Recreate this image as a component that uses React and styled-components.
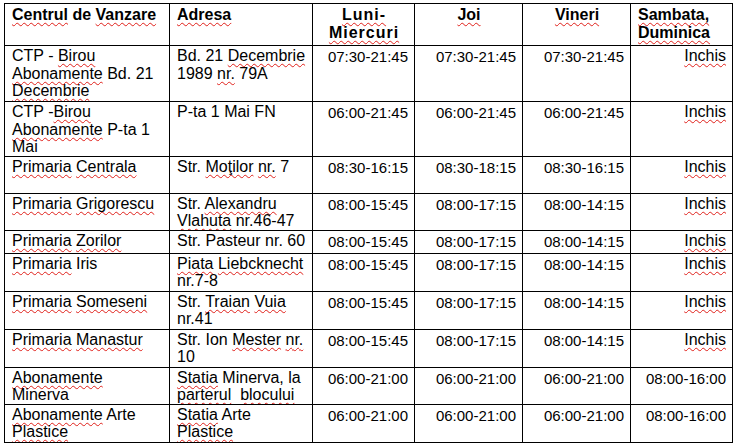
import React from "react";
import styled, { createGlobalStyle } from "styled-components";

const GlobalStyle = createGlobalStyle`
  html, body { margin: 0; padding: 0; background: #ffffff; }
  body { font-family: "Liberation Sans", Arial, sans-serif; color: #000; }
`;

const Page = styled.div`
  padding: 3px 0 0 4px;
`;

const Table = styled.table`
  border-collapse: collapse;
  table-layout: fixed;
  width: 729px;
`;

const Row = styled.tr`
  height: ${(p) => p.$h}px;
`;

const Cell = styled.td`
  border: 1px solid #000;
  padding: ${(p) => (p.$time ? 2 : 1)}px 6px 0 7px;
  vertical-align: top;
  text-align: ${(p) => p.$align || "left"};
  font-size: ${(p) => (p.$time ? 15 : 16)}px;
  line-height: ${(p) => (p.$time ? 17 : 17.5)}px;
  white-space: nowrap;
  overflow: hidden;
`;

const HeadCell = styled(Cell).attrs({ as: "th" })`
  font-weight: bold;
  padding-top: 2px;
  line-height: 18px;
  letter-spacing: ${(p) => (p.$spaced ? "1px" : "normal")};
`;

const Line = styled.span`
  display: block;
`;

const Squiggle = styled.span`
  text-decoration-line: underline;
  text-decoration-style: wavy;
  text-decoration-color: #e0201a;
  text-decoration-thickness: 1px;
  text-underline-offset: 2px;
  text-decoration-skip-ink: none;
`;

function renderText(str) {
  return str.split("|").map((line, li) => {
    const parts = line.split("~");
    return (
      <Line key={li}>
        {parts.map((part, pi) =>
          pi % 2 === 1 ? <Squiggle key={pi}>{part}</Squiggle> : <React.Fragment key={pi}>{part}</React.Fragment>
        )}
      </Line>
    );
  });
}

const header = [
  { t: "~Centrul~ de ~Vanzare~", a: "left" },
  { t: "~Adresa~", a: "left" },
  { t: "~Luni-~|~Miercuri~", a: "center", s: true },
  { t: "~Joi~", a: "center" },
  { t: "~Vineri~", a: "center" },
  { t: "~Sambata,~|~Duminica~", a: "left" },
];

const rows = [
  { h: 56, c: ["CTP - ~Birou~|~Abonamente~ Bd. 21|~Decembrie~", "Bd. 21 ~Decembrie~|1989 ~nr.~ 79A", "07:30-21:45", "07:30-21:45", "07:30-21:45", "~Inchis~"] },
  { h: 54, c: ["CTP -~Birou~|~Abonamente~ P-ta 1|Mai", "P-ta 1 Mai FN", "06:00-21:45", "06:00-21:45", "06:00-21:45", "~Inchis~"] },
  { h: 37, c: ["~Primaria~ ~Centrala~", "Str. ~Moţilor~ ~nr.~ 7", "08:30-16:15", "08:30-18:15", "08:30-16:15", "~Inchis~"] },
  { h: 37, c: ["~Primaria~ ~Grigorescu~", "Str. ~Alexandru~|~Vlahuta~ nr.46-47", "08:00-15:45", "08:00-17:15", "08:00-14:15", "~Inchis~"] },
  { h: 23, c: ["~Primaria~ ~Zorilor~", "Str. Pasteur nr. 60", "08:00-15:45", "08:00-17:15", "08:00-14:15", "~Inchis~"] },
  { h: 38, c: ["~Primaria~ Iris", "~Piata~ ~Liebcknecht~|nr.7-8", "08:00-15:45", "08:00-17:15", "08:00-14:15", "~Inchis~"] },
  { h: 38, c: ["~Primaria~ ~Someseni~", "Str. ~Traian~ ~Vuia~|nr.41", "08:00-15:45", "08:00-17:15", "08:00-14:15", "~Inchis~"] },
  { h: 38, c: ["~Primaria~ ~Manastur~", "Str. Ion ~Mester~ ~nr.~|10", "08:00-15:45", "08:00-17:15", "08:00-14:15", "~Inchis~"] },
  { h: 37, c: ["~Abonamente~|Minerva", "~Statia~ Minerva, la|~parterul~\u00a0 ~blocului~", "06:00-21:00", "06:00-21:00", "06:00-21:00", "08:00-16:00"] },
  { h: 38, c: ["~Abonamente~ Arte|~Plastice~", "~Statia~ Arte|~Plastice~", "06:00-21:00", "06:00-21:00", "06:00-21:00", "08:00-16:00"] },
];

const bodyAlign = ["left", "left", "right", "right", "right", "right"];
const widths = [165, 143, 102, 108, 108, 102];
const isTime = (s) => /^\d\d:\d\d-\d\d:\d\d$/.test(s);

export default function App() {
  return (
    <>
      <GlobalStyle />
      <Page>
        <Table>
          <colgroup>
            {widths.map((w, i) => (
              <col key={i} style={{ width: w }} />
            ))}
          </colgroup>
          <thead>
            <Row $h={42}>
              {header.map((h, i) => (
                <HeadCell key={i} $align={h.a} $spaced={h.s}>
                  {renderText(h.t)}
                </HeadCell>
              ))}
            </Row>
          </thead>
          <tbody>
            {rows.map((r, ri) => (
              <Row key={ri} $h={r.h}>
                {r.c.map((c, ci) => (
                  <Cell key={ci} $align={bodyAlign[ci]} $time={isTime(c)}>
                    {renderText(c)}
                  </Cell>
                ))}
              </Row>
            ))}
          </tbody>
        </Table>
      </Page>
    </>
  );
}
